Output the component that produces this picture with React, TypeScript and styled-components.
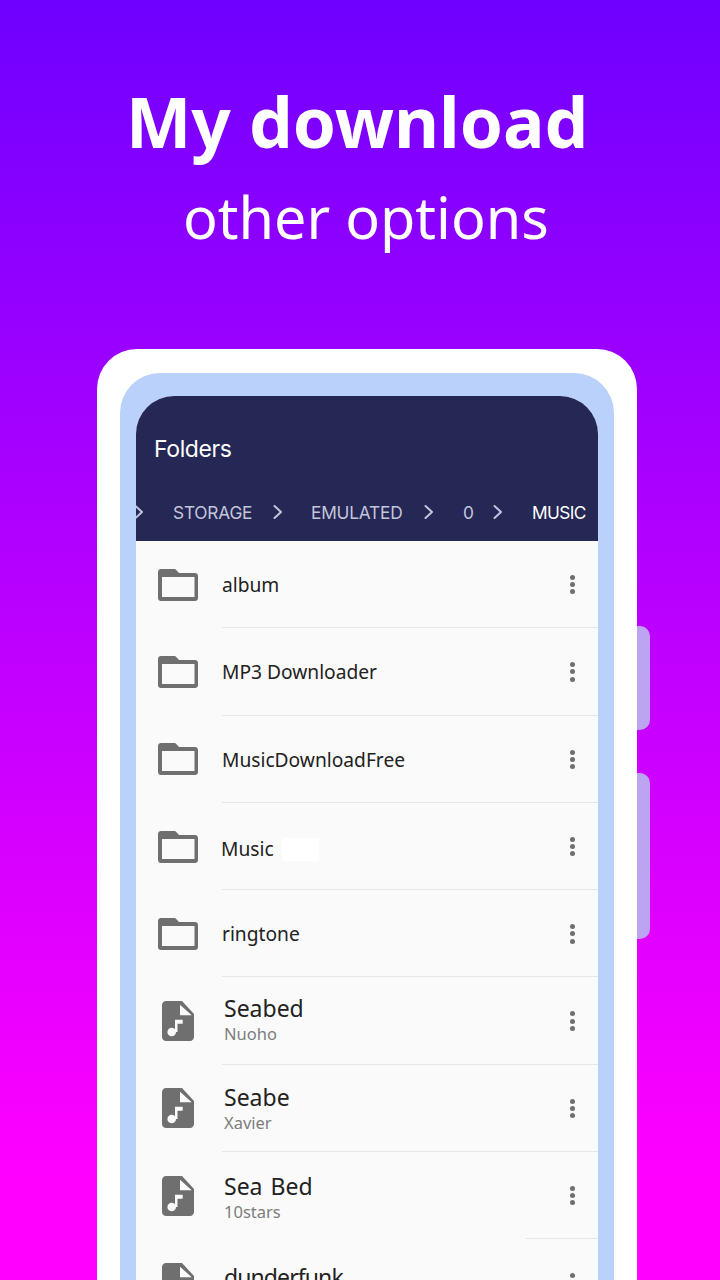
import styled, { createGlobalStyle } from "styled-components";
import { Fragment } from "react";

const GlobalStyle = createGlobalStyle`
  html, body {
    margin: 0;
    padding: 0;
    background: #ff00ff;
  }
  * {
    box-sizing: border-box;
  }
`;

const Page = styled.div`
  width: 720px;
  height: 1280px;
  overflow: hidden;
  background: linear-gradient(180deg, #6f00ff 0%, #ff00ff 92%);
  font-family: "Noto Sans", "Open Sans", sans-serif;
`;

const Headline = styled.h1`
  margin: 0;
  padding: 72px 0 0 126px;
  height: 176px;
  font-size: 69.3px;
  line-height: 98px;
  font-weight: 700;
  color: #fff;
  white-space: nowrap;
`;

const Subline = styled.h2`
  margin: 0;
  padding-left: 183px;
  height: 173px;
  font-size: 57.5px;
  line-height: 82px;
  font-weight: 400;
  color: #fff;
  white-space: nowrap;
`;

const PhoneRow = styled.div`
  display: flex;
  padding-left: 97px;
  align-items: flex-start;
`;

const Phone = styled.div`
  width: 540px;
  height: 1100px;
  flex: none;
  padding: 24px 23px 0 23px;
  background: #fff;
  border-radius: 40px 40px 0 0;
`;

const SideKeys = styled.div`
  display: flex;
  flex-direction: column;
  gap: 43px;
  padding-top: 277px;
`;

const SideKey = styled.div<{ $h: number }>`
  width: 13px;
  height: ${(p) => p.$h}px;
  background: #bca4f2;
  border-radius: 0 10px 10px 0;
`;

const Bezel = styled.div`
  height: 1000px;
  padding: 23px 16px 0 16px;
  background: #b9d1fb;
  border-radius: 40px 40px 0 0;
`;

const Screen = styled.div`
  background: #fafafa;
  border-radius: 38px 38px 0 0;
  overflow: hidden;
  height: 900px;
`;

const AppBar = styled.div`
  height: 145px;
  background: #252755;
  color: #fff;
`;

const AppTitle = styled.div`
  padding: 35px 0 0 18px;
  height: 97px;
  font-family: "Inter", "Noto Sans", sans-serif;
  font-size: 23px;
  line-height: 36px;
  letter-spacing: -0.4px;
`;

const Crumbs = styled.div`
  display: flex;
  align-items: center;
  height: 38px;
  white-space: nowrap;
`;

const Crumb = styled.span<{ $on?: boolean; $w: number }>`
  width: ${(p) => p.$w}px;
  flex: none;
  font-family: "Inter", "Noto Sans", sans-serif;
  font-size: 17.3px;
  letter-spacing: ${(p) => (p.$on ? "-0.6px" : "-0.2px")};
  color: ${(p) => (p.$on ? "#ffffff" : "#c3c6dc")};
`;

const Chevron = styled.svg<{ $w: number }>`
  width: ${(p) => p.$w}px;
  height: 16px;
  flex: none;
`;

const Row = styled.div`
  position: relative;
  height: 87.3px;
  display: flex;
  align-items: center;
`;

const IconSlot = styled.div<{ $left: number }>`
  width: 86px;
  flex: none;
  padding-left: ${(p) => p.$left}px;
  display: flex;
`;

const RowBody = styled.div<{ $pad: number; $lift?: number; $drop?: number }>`
  flex: 1;
  min-width: 0;
  margin-left: ${(p) => p.$pad}px;
  padding-bottom: ${(p) => p.$lift || 0}px;
  padding-top: ${(p) => p.$drop || 0}px;
`;

const FolderName = styled.div`
  display: flex;
  align-items: center;
  font-family: "Noto Sans", sans-serif;
  font-size: 19.2px;
  line-height: 28px;
  color: #222;
`;

const Patch = styled.span`
  width: 37px;
  height: 23px;
  margin-left: 8px;
  background: #ffffff;
`;

const SongName = styled.div<{ $tight?: boolean }>`
  font-size: 23px;
  line-height: 30px;
  word-spacing: 2px;
  letter-spacing: ${(p) => (p.$tight ? "-0.9px" : "0")};
  color: #222;
`;

const Artist = styled.div`
  font-size: 16.5px;
  line-height: 22px;
  color: #7d7d7d;
`;

const More = styled.div`
  width: 5px;
  margin-right: 23.5px;
  display: flex;
  flex-direction: column;
  gap: 2.2px;
  flex: none;
`;

const Dot = styled.span`
  width: 5px;
  height: 5px;
  border-radius: 50%;
  background: #6f6f6f;
`;

const Rule = styled.div<{ $left: number }>`
  position: absolute;
  left: ${(p) => p.$left}px;
  right: 0;
  bottom: 0;
  height: 1px;
  background: #e6e6e6;
`;

const FolderIcon = () => (
  <svg width="40" height="32" viewBox="0 0 40 32">
    <path
      fill="#6f6f6f"
      d="M3 0h13c1 0 1.600.3 2.200 1L21 4h16c1.700 0 3 1.300 3 3V29c0 1.700-1.300 3-3 3H3c-1.700 0-3-1.300-3-3V3C0 1.300 1.300 0 3 0z"
    />
    <rect x="4" y="8" width="32.500" height="20" fill="#fafafa" />
  </svg>
);

const SongIcon = () => (
  <svg width="32" height="40" viewBox="0 0 32 40">
    <path
      fill="#6f6f6f"
      d="M4 0h16L32 13V36c0 2.200-1.800 4-4 4H4c-2.200 0-4-1.800-4-4V4c0-2.200 1.800-4 4-4z"
    />
    <path fill="#fafafa" d="M18 3.700V14.300H29.700z" />
    <path fill="#fafafa" d="M13 18.700H20.700V22.700H15.500V31H13z" />
    <circle cx="9.700" cy="31" r="4.300" fill="#fafafa" />
  </svg>
);

const ChevronIcon = ({ w, pad, c }: { w: number; pad: number; c: string }) => (
  <Chevron $w={w} viewBox={`0 0 ${w} 16`}>
    <path
      d={`M${pad + 1.500} 2l6.500 6-6.500 6`}
      fill="none"
      stroke={c}
      strokeWidth="2"
      strokeLinecap="round"
      strokeLinejoin="round"
    />
  </Chevron>
);

const folders = ["album", "MP3 Downloader", "MusicDownloadFree", "Music", "ringtone"];
const songs = [
  { name: "Seabed", artist: "Nuoho", lift: 5, drop: 0 },
  { name: "Seabe", artist: "Xavier", lift: 0, drop: 0 },
  { name: "Sea Bed", artist: "10stars", lift: 0, drop: 2 },
  { name: "dunderfunk", artist: "", lift: 12, drop: 0 },
];

const Dots = () => (
  <More>
    <Dot />
    <Dot />
    <Dot />
  </More>
);

export default function App() {
  return (
    <Fragment>
      <GlobalStyle />
      <Page>
        <Headline>My download</Headline>
        <Subline>other options</Subline>
        <PhoneRow>
          <Phone>
            <Bezel>
              <Screen>
                <AppBar>
                  <AppTitle>Folders</AppTitle>
                  <Crumbs>
                    <ChevronIcon w={37} pad={-2} c="#c3c6dc" />
                    <Crumb $w={100}>STORAGE</Crumb>
                    <ChevronIcon w={38} pad={0} c="#c3c6dc" />
                    <Crumb $w={113}>EMULATED</Crumb>
                    <ChevronIcon w={39} pad={0} c="#c3c6dc" />
                    <Crumb $w={30}>0</Crumb>
                    <ChevronIcon w={39} pad={0} c="#c3c6dc" />
                    <Crumb $on $w={60}>MUSIC</Crumb>
                  </Crumbs>
                </AppBar>
                {folders.map((f) => (
                  <Row key={f}>
                    <IconSlot $left={22}>
                      <FolderIcon />
                    </IconSlot>
                    <RowBody $pad={f === "Music" ? -1 : 0} $drop={f === "Music" ? 5 : 1}>
                      <FolderName>
                        {f}
                        {f === "Music" && <Patch />}
                      </FolderName>
                    </RowBody>
                    <Dots />
                    <Rule $left={86} />
                  </Row>
                ))}
                {songs.map((s, i) => (
                  <Row key={s.name}>
                    <IconSlot $left={26}>
                      <SongIcon />
                    </IconSlot>
                    <RowBody $pad={2} $lift={s.lift} $drop={s.drop}>
                      <SongName $tight={s.artist === ""}>{s.name}</SongName>
                      <Artist>{s.artist}</Artist>
                    </RowBody>
                    <Dots />
                    <Rule $left={i === 2 ? 390 : 86} />
                  </Row>
                ))}
              </Screen>
            </Bezel>
          </Phone>
          <SideKeys>
            <SideKey $h={104} />
            <SideKey $h={166} />
          </SideKeys>
        </PhoneRow>
      </Page>
    </Fragment>
  );
}
